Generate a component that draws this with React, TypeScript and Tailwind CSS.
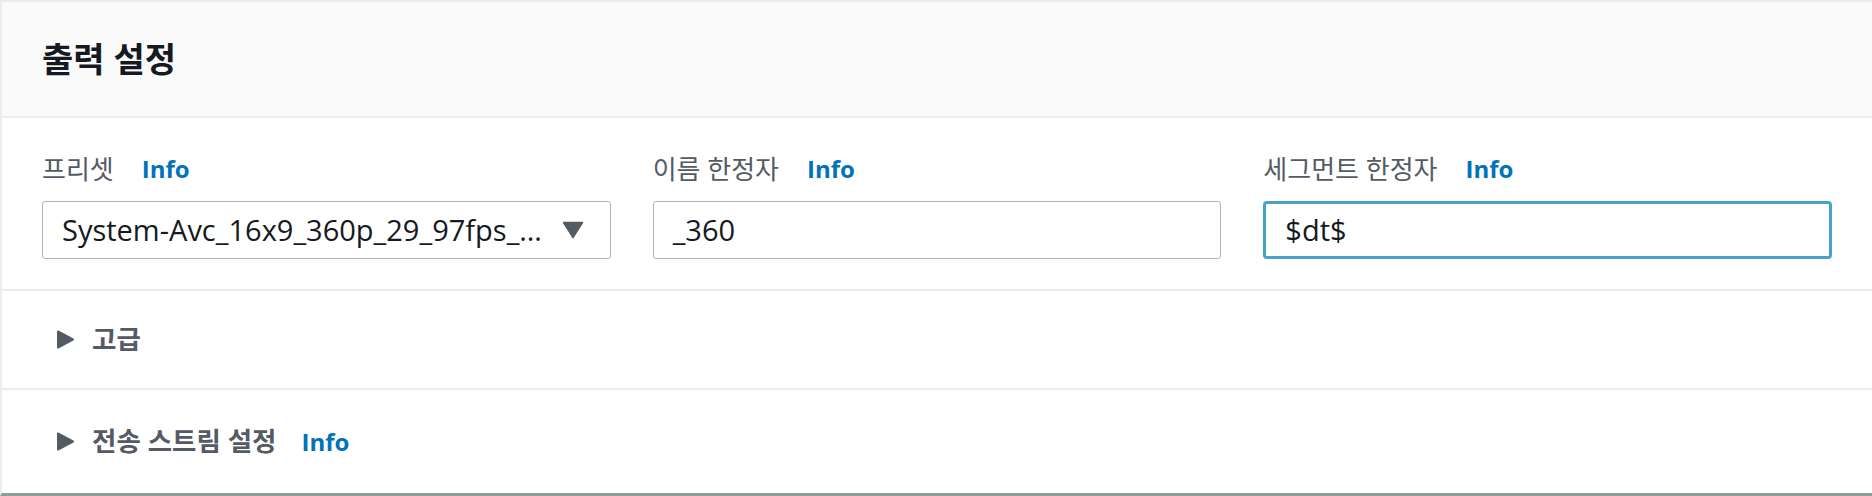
import React from 'react';

const font = { fontFamily: '"Open Sans", "Noto Sans CJK KR", sans-serif' };

const InfoLink = ({ className = 'ml-[28px]' }: { className?: string }) => (
  <a className={`${className} text-[24px] font-bold text-[#0073bb] leading-none cursor-pointer`}>Info</a>
);

const Caret = () => (
  <svg width="19" height="19" viewBox="0 0 19 19" className="shrink-0">
    <path d="M2 1.5 L17 9.5 L2 17.5 Z" fill="#545b64" stroke="#545b64" strokeWidth="2" strokeLinejoin="round" />
  </svg>
);

const DownCaret = () => (
  <svg width="22" height="18" viewBox="0 0 22 18" className="shrink-0">
    <path d="M1.5 1.5 L20.5 1.5 L11 16.5 Z" fill="#545b64" stroke="#545b64" strokeWidth="1.5" strokeLinejoin="round" />
  </svg>
);

const FieldLabel = ({ text }: { text: string }) => (
  <div className="flex items-center h-[32px]">
    <span className="text-[26px] text-[#545b64] leading-none">{text}</span>
    <InfoLink />
  </div>
);

export default function App() {
  return (
    <div style={font} className="w-[1872px] h-[496px] bg-white overflow-hidden">
      <div className="flex flex-col h-full border-t-2 border-l-2 border-[#eaeded] border-b-[3px] border-b-[#8d9a9b]">
        {/* Header */}
        <div className="h-[116px] shrink-0 bg-[#fafafa] border-b-2 border-[#eaeded] flex items-center pl-[40px]">
          <h2 className="text-[34px] font-bold text-[#16191f] leading-none">출력 설정</h2>
        </div>

        {/* Fields */}
        <div className="grid grid-cols-3 gap-x-[42px] px-[40px] pt-[35px] pb-[30px] border-b-2 border-[#eaeded]">
          <div className="flex flex-col gap-[16px]">
            <FieldLabel text="프리셋" />
            <div className="h-[58px] border border-[#aab7b8] rounded-[3px] flex items-center justify-between pl-[19px] pr-[26px] bg-white">
              <span className="text-[29px] text-[#16191f] whitespace-nowrap overflow-hidden">System-Avc_16x9_360p_29_97fps_…</span>
              <DownCaret />
            </div>
          </div>
          <div className="flex flex-col gap-[16px]">
            <FieldLabel text="이름 한정자" />
            <div className="h-[58px] border border-[#aab7b8] rounded-[3px] flex items-center pl-[19px] bg-white">
              <span className="text-[29px] text-[#16191f]">_360</span>
            </div>
          </div>
          <div className="flex flex-col gap-[16px]">
            <FieldLabel text="세그먼트 한정자" />
            <div className="h-[58px] border-[3px] border-[#47a3c8] rounded-[4px] flex items-center pl-[19px] bg-white">
              <span className="text-[29px] text-[#16191f]">$dt$</span>
            </div>
          </div>
        </div>

        {/* Advanced */}
        <div className="h-[99px] shrink-0 flex items-center pl-[54px] gap-[17px] border-b-2 border-[#eaeded]">
          <Caret />
          <span className="text-[26.5px] font-bold text-[#545b64] leading-none">고급</span>
        </div>

        {/* Transport stream */}
        <div className="flex-1 flex items-center pl-[54px] gap-[17px]">
          <Caret />
          <span className="text-[26.5px] font-bold text-[#545b64] leading-none">전송 스트림 설정</span>
          <InfoLink className="ml-[8px]" />
        </div>
      </div>
    </div>
  );
}
